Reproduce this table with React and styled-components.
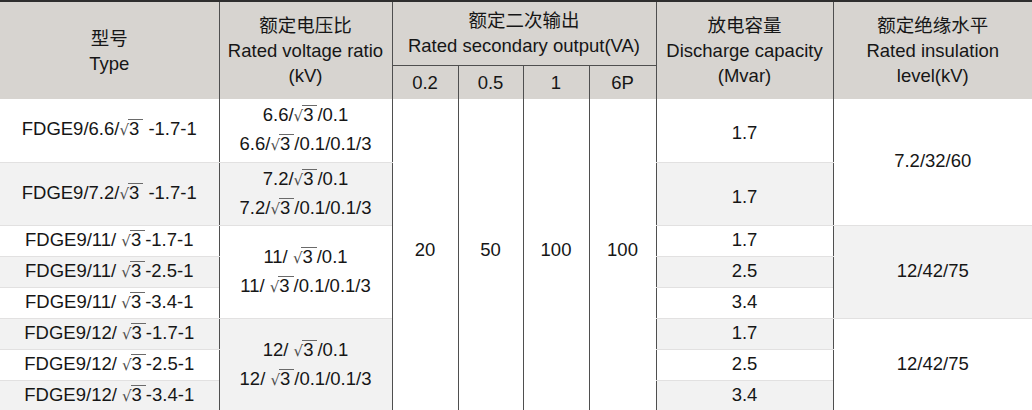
import React from 'react';
import styled, { createGlobalStyle } from 'styled-components';

const Global = createGlobalStyle`
  html, body { margin: 0; padding: 0; overflow: hidden; background: #fff; }
  body { font-family: "Liberation Sans", Arial, "Noto Sans CJK SC", sans-serif; }
`;

const LINE = '#4f4f4f';
const ROWLINE = '#e2e1e1';
const STRIPE = '#f2f2f2';
const HEAD = '#d7d4d0';

const Table = styled.table`
  width: 1032px;
  border-collapse: collapse;
  table-layout: fixed;
  border-top: 2px solid #2e2e2e;
  font-family: "Liberation Sans", Arial, "Noto Sans CJK SC", sans-serif;
  font-size: 18.5px;
  color: #161616;
`;

const HeadRow = styled.tr`
  height: ${p => p.$h}px;
`;

const Head = styled.th`
  background: ${HEAD};
  font-weight: normal;
  line-height: 25px;
  padding: 0;
  text-align: center;
  vertical-align: middle;
  white-space: nowrap;
  border-left: ${p => (p.$first ? 'none' : `1px solid ${LINE}`)};
  border-bottom: ${p => (p.$split ? `1px solid ${LINE}` : 'none')};
`;

const Line = styled.span`
  display: block;
`;

const BodyRow = styled.tr`
  height: ${p => p.$h}px;
  background: ${p => (p.$striped ? STRIPE : '#fff')};
`;

const Cell = styled.td`
  padding: ${p => p.$pad || '0 0 2px'};
  text-align: center;
  vertical-align: middle;
  white-space: nowrap;
  line-height: ${p => p.$lh || 22}px;
  border-left: ${p => (p.$first ? 'none' : `1px solid ${LINE}`)};
  border-bottom: 1px solid ${p => (p.$noRule ? 'transparent' : ROWLINE)};
  background: ${p => (p.$bg ? p.$bg : 'inherit')};
`;

const Radical = styled.span`
  font-family: "DejaVu Sans", sans-serif;
  font-size: 15px;
  line-height: 16px;
  color: #4a4a4a;
  margin-right: -1px;
`;

const Radicand = styled.span`
  display: inline-block;
  line-height: 17px;
  border-top: 1px solid #6a6a6a;
  padding: 0 4px 0 1px;
`;

const Sqrt3 = () => (
  <>
    <Radical>√</Radical>
    <Radicand>3</Radicand>
  </>
);

const rows = [
  { pre: 'FDGE9/6.6/', post: ' -1.7-1', cap: '1.7', h: 63 },
  { pre: 'FDGE9/7.2/', post: ' -1.7-1', cap: '1.7', h: 63 },
  { pre: 'FDGE9/11/ ', post: '-1.7-1', cap: '1.7', h: 31 },
  { pre: 'FDGE9/11/ ', post: '-2.5-1', cap: '2.5', h: 31 },
  { pre: 'FDGE9/11/ ', post: '-3.4-1', cap: '3.4', h: 31 },
  { pre: 'FDGE9/12/ ', post: '-1.7-1', cap: '1.7', h: 31 },
  { pre: 'FDGE9/12/ ', post: '-2.5-1', cap: '2.5', h: 31 },
  { pre: 'FDGE9/12/ ', post: '-3.4-1', cap: '3.4', h: 31 },
];

const ratio = {
  0: { base: '6.6/', span: 1, bg: '#fff' },
  1: { base: '7.2/', span: 1, bg: STRIPE },
  2: { base: '11/ ', span: 3, bg: '#fff' },
  5: { base: '12/ ', span: 3, bg: STRIPE },
};

const insulation = {
  0: { text: '7.2/32/60', span: 2, bg: '#fff' },
  2: { text: '12/42/75', span: 3, bg: STRIPE },
  5: { text: '12/42/75', span: 3, bg: '#fff' },
};

const outputs = ['20', '50', '100', '100'];

export default function App() {
  return (
    <>
      <Global />
      <Table>
        <colgroup>
          <col style={{ width: 219 }} />
          <col style={{ width: 173 }} />
          <col style={{ width: 66 }} />
          <col style={{ width: 65 }} />
          <col style={{ width: 66 }} />
          <col style={{ width: 67 }} />
          <col style={{ width: 177 }} />
          <col style={{ width: 199 }} />
        </colgroup>
        <thead>
          <HeadRow $h={64}>
            <Head $first rowSpan={2}>
              <Line>型号</Line>
              <Line>Type</Line>
            </Head>
            <Head rowSpan={2}>
              <Line>额定电压比</Line>
              <Line>Rated voltage ratio</Line>
              <Line>(kV)</Line>
            </Head>
            <Head colSpan={4} $split>
              <Line>额定二次输出</Line>
              <Line>Rated secondary output(VA)</Line>
            </Head>
            <Head rowSpan={2}>
              <Line>放电容量</Line>
              <Line>Discharge capacity</Line>
              <Line>(Mvar)</Line>
            </Head>
            <Head rowSpan={2}>
              <Line>额定绝缘水平</Line>
              <Line>Rated insulation</Line>
              <Line>level(kV)</Line>
            </Head>
          </HeadRow>
          <HeadRow $h={34}>
            <Head>0.2</Head>
            <Head>0.5</Head>
            <Head>1</Head>
            <Head>6P</Head>
          </HeadRow>
        </thead>
        <tbody>
          {rows.map((r, i) => (
            <BodyRow key={i} $h={r.h} $striped={i % 2 === 1}>
              <Cell $first>
                {r.pre}
                <Sqrt3 />
                {r.post}
              </Cell>
              {ratio[i] && (
                <Cell rowSpan={ratio[i].span} $bg={ratio[i].bg} $lh={29}>
                  <Line>
                    {ratio[i].base}
                    <Sqrt3 />/0.1
                  </Line>
                  <Line>
                    {ratio[i].base}
                    <Sqrt3 />/0.1/0.1/3
                  </Line>
                </Cell>
              )}
              {i === 0 &&
                outputs.map((v, k) => (
                  <Cell key={k} rowSpan={8} $bg="#fff" $noRule $pad="0 0 10px">
                    {v}
                  </Cell>
                ))}
              <Cell $pad={r.h > 40 ? '6px 0 0' : undefined}>{r.cap}</Cell>
              {insulation[i] && (
                <Cell rowSpan={insulation[i].span} $bg={insulation[i].bg}>
                  {insulation[i].text}
                </Cell>
              )}
            </BodyRow>
          ))}
        </tbody>
      </Table>
    </>
  );
}
